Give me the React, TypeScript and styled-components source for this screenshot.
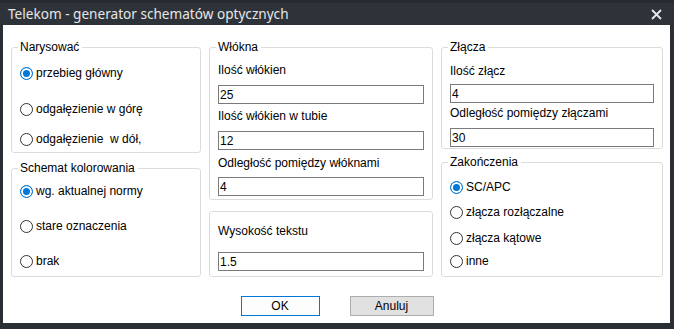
import React from 'react';
import styled, { createGlobalStyle } from 'styled-components';

const GlobalStyle = createGlobalStyle`
    html, body {
        margin: 0;
        padding: 0;
        background: #2a2e35;
    }
    * {
        box-sizing: border-box;
    }
`;

const Window = styled.div`
    width: 674px;
    height: 329px;
    display: flex;
    flex-direction: column;
    background: #2a2e35;
    padding: 0 4px 6px 3px;
    font-family: 'Liberation Sans', Arial, sans-serif;
    font-size: 12px;
    color: #000;
`;

const TitleBar = styled.div`
    height: 25px;
    flex-shrink: 0;
    display: flex;
    align-items: center;
    justify-content: space-between;
    background: #2e333a;
    border-top: 3px solid #272b31;
    margin: 0 -4px 0 -3px;
    padding: 0 12px 0 8px;
`;

const Title = styled.span`
    font-family: 'Noto Sans', 'Open Sans', sans-serif;
    font-size: 13.6px;
    line-height: 18px;
    color: #e6e6e6;
`;

const Body = styled.div`
    flex: 1;
    display: flex;
    flex-direction: column;
    background: #fff;
    padding: 15px 7px 7px 8px;
`;

const Columns = styled.div`
    display: flex;
    gap: 8px;
    height: 237px;
`;

const Column = styled.div<{ $width: number }>`
    width: ${p => p.$width}px;
    display: flex;
    flex-direction: column;
`;

const Group = styled.fieldset<{ $grow?: boolean; $mt?: number; $pb?: number }>`
    margin: ${p => p.$mt ?? 0}px 0 0 0;
    padding: 0 8px ${p => p.$pb ?? 0}px 8px;
    border: 1px solid #dcdcdc;
    border-radius: 3px;
    min-width: 0;
    display: flex;
    flex-direction: column;
    flex: ${p => (p.$grow ? 1 : 'none')};
`;

const Legend = styled.legend`
    margin-left: -2px;
    padding: 0 3px 0 2px;
    line-height: 14px;
`;

const RadioRow = styled.label<{ $mt: number }>`
    display: flex;
    align-items: center;
    gap: 3px;
    height: 16px;
    margin-top: ${p => p.$mt}px;
    line-height: 14px;
    white-space: pre;
`;

const RadioCircle = styled.span<{ $checked?: boolean }>`
    width: 13px;
    height: 13px;
    border-radius: 50%;
    flex-shrink: 0;
    border: 1px solid ${p => (p.$checked ? '#0078d7' : '#333')};
    background: ${p => (p.$checked ? '#0078d7' : '#fff')};
    box-shadow: ${p => (p.$checked ? 'inset 0 0 0 2px #fff' : 'none')};
`;

const FieldLabel = styled.div<{ $mt: number }>`
    line-height: 14px;
    margin-top: ${p => p.$mt}px;
`;

const TextInput = styled.input<{ $mt: number }>`
    display: block;
    width: 100%;
    height: 19px;
    margin: ${p => p.$mt}px 0 0 0;
    padding: 0 1px;
    border: 1px solid #7a7a7a;
    border-radius: 0;
    font-family: 'Liberation Sans', Arial, sans-serif;
    font-size: 12px;
    color: #000;
    background: #fff;
    outline: none;
`;

const Footer = styled.div`
    display: flex;
    justify-content: center;
    gap: 30px;
    margin-top: 19px;
`;

const Button = styled.button<{ $primary?: boolean; $width: number }>`
    width: ${p => p.$width}px;
    height: 20px;
    padding: 0;
    border: 1px solid ${p => (p.$primary ? '#0078d7' : '#adadad')};
    background: ${p => (p.$primary ? '#fdfdfd' : '#e1e1e1')};
    font-family: 'Liberation Sans', Arial, sans-serif;
    font-size: 12px;
    color: #000;
`;

const CloseIcon = () => (
    <svg width="11" height="11" viewBox="0 0 11 11">
        <path d="M1 1 L10 10 M10 1 L1 10" stroke="#e8e8e8" strokeWidth="1.8" />
    </svg>
);

type RadioProps = { label: string; checked?: boolean; mt: number };

const Radio = ({ label, checked, mt }: RadioProps) => (
    <RadioRow $mt={mt}>
        <RadioCircle $checked={checked} />
        {label}
    </RadioRow>
);

const App = () => (
    <>
        <GlobalStyle />
        <Window>
            <TitleBar>
                <Title>Telekom - generator schematów optycznych</Title>
                <CloseIcon />
            </TitleBar>
            <Body>
                <Columns>
                    <Column $width={190}>
                        <Group $pb={5}>
                            <Legend>Narysować</Legend>
                            <Radio label="przebieg główny" checked mt={11} />
                            <Radio label="odgałęzienie w górę" mt={20} />
                            <Radio label="odgałęzienie  w dół," mt={14} />
                        </Group>
                        <Group $grow $mt={8}>
                            <Legend>Schemat kolorowania</Legend>
                            <Radio label="wg. aktualnej normy" checked mt={8} />
                            <Radio label="stare oznaczenia" mt={19} />
                            <Radio label="brak" mt={19} />
                        </Group>
                    </Column>
                    <Column $width={224}>
                        <Group $pb={3}>
                            <Legend>Włókna</Legend>
                            <FieldLabel $mt={9}>Ilość włókien</FieldLabel>
                            <TextInput $mt={8} defaultValue="25" />
                            <FieldLabel $mt={5}>Ilość włókien w tubie</FieldLabel>
                            <TextInput $mt={8} defaultValue="12" />
                            <FieldLabel $mt={6}>Odległość pomiędzy włóknami</FieldLabel>
                            <TextInput $mt={7} defaultValue="4" />
                        </Group>
                        <Group $grow $mt={11}>
                            <FieldLabel $mt={12}>Wysokość tekstu</FieldLabel>
                            <TextInput $mt={14} defaultValue="1.5" />
                        </Group>
                    </Column>
                    <Column $width={222}>
                        <Group $pb={1}>
                            <Legend>Złącza</Legend>
                            <FieldLabel $mt={10}>Ilość złącz</FieldLabel>
                            <TextInput $mt={6} defaultValue="4" />
                            <FieldLabel $mt={3}>Odległość pomiędzy złączami</FieldLabel>
                            <TextInput $mt={8} defaultValue="30" />
                        </Group>
                        <Group $grow $mt={6}>
                            <Legend>Zakończenia</Legend>
                            <Radio label="SC/APC" checked mt={10} />
                            <Radio label="złącza rozłączalne" mt={9} />
                            <Radio label="złącza kątowe" mt={10} />
                            <Radio label="inne" mt={7} />
                        </Group>
                    </Column>
                </Columns>
                <Footer>
                    <Button $primary $width={79}>OK</Button>
                    <Button $width={84}>Anuluj</Button>
                </Footer>
            </Body>
        </Window>
    </>
);

export default App;
